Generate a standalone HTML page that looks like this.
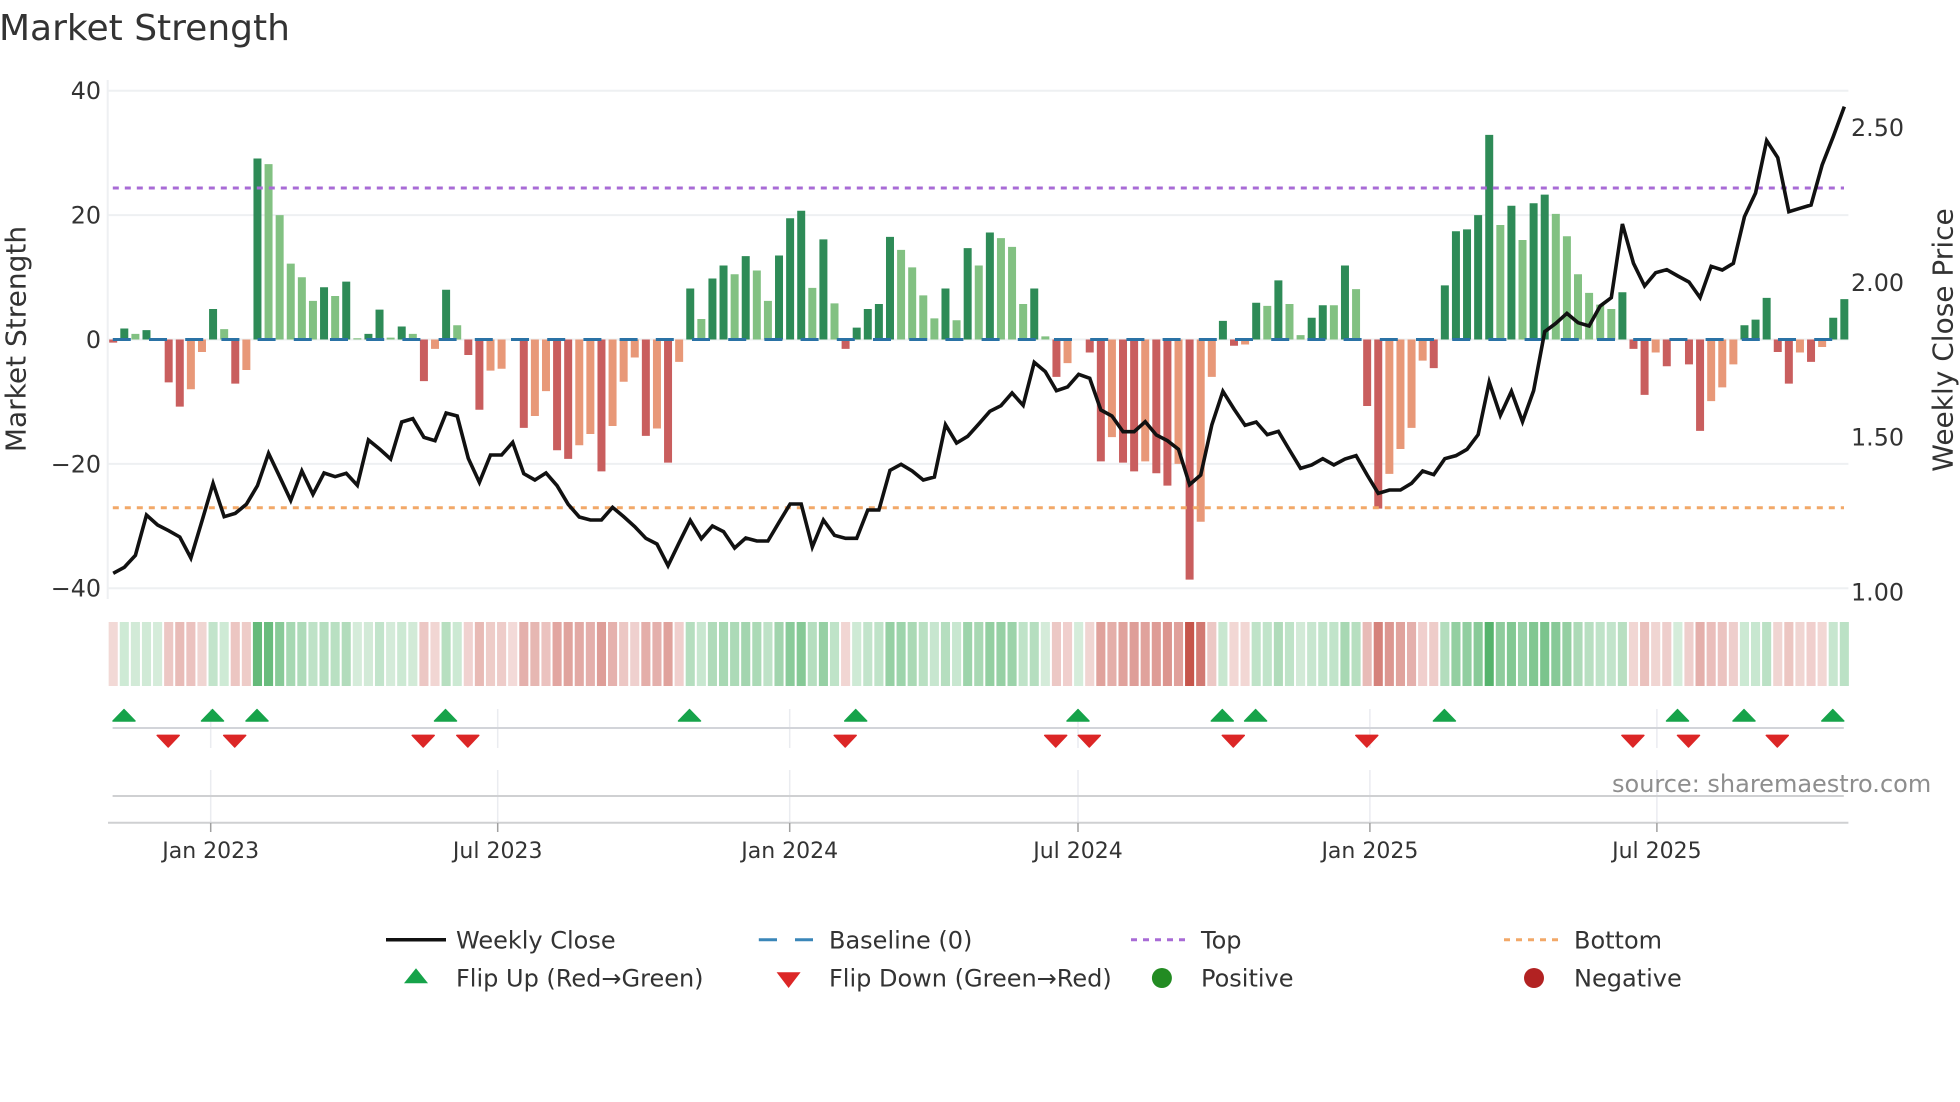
<!DOCTYPE html>
<html><head><meta charset="utf-8"><title>Market Strength</title>
<style>
html,body{margin:0;padding:0;background:#fff;width:1960px;height:1102px;overflow:hidden}
svg{display:block}
text{font-family:"DejaVu Sans","Liberation Sans",sans-serif;fill:#333}
.t{font-size:23.8px}
.x{font-size:22px}
.l{font-size:24px}
</style></head><body>
<svg width="1960" height="1102" viewBox="0 0 1960 1102" xmlns="http://www.w3.org/2000/svg">
<rect width="1960" height="1102" fill="#fff"/>
<text x="-1" y="40" style="font-size:36px">Market Strength</text>

<!-- grid -->
<g stroke="#eef0f2" stroke-width="2" fill="none">
<path d="M108 90.7H1848.4M108 215.1H1848.4M108 339.5H1848.4M108 463.9H1848.4M108 588.3H1848.4"/>
<path d="M107.7 80V599"/>
</g>

<!-- bars -->
<g transform="translate(113.2,339.5) scale(11.097,-6.22)" fill="none" stroke-width=".72">
<path stroke="#2e8b57" d="M1 0V1.77M3 0V1.5M9 0V4.9M13 0V29.1M19 0V8.4M21 0V9.3M23 0V.9M24 0V4.8M26 0V2.1M30 0V8M52 0V8.2M54 0V9.8M55 0V11.9M57 0V13.4M60 0V13.5M61 0V19.5M62 0V20.7M64 0V16.1M67 0V1.9M68 0V4.9M69 0V5.7M70 0V16.5M75 0V8.2M77 0V14.7M79 0V17.2M83 0V8.2M100 0V3M103 0V5.9M105 0V9.5M108 0V3.5M109 0V5.5M111 0V11.9M120 0V8.7M121 0V17.4M122 0V17.7M123 0V20M124 0V32.9M126 0V21.5M128 0V21.9M129 0V23.3M136 0V7.6M147 0V2.3M148 0V3.2M149 0V6.7M155 0V3.5M156 0V6.5"/>
<path stroke="#82c182" d="M2 0V.9M10 0V1.66M14 0V28.2M15 0V20M16 0V12.2M17 0V10M18 0V6.2M20 0V7M22 0V.2M25 0V.3M27 0V.9M31 0V2.3M53 0V3.3M56 0V10.5M58 0V11.1M59 0V6.2M63 0V8.3M65 0V5.8M71 0V14.4M72 0V11.6M73 0V7.1M74 0V3.4M76 0V3.1M78 0V11.9M80 0V16.3M81 0V14.9M82 0V5.7M84 0V.5M104 0V5.4M106 0V5.7M107 0V.7M110 0V5.5M112 0V8.1M125 0V18.4M127 0V16M130 0V20.2M131 0V16.6M132 0V10.5M133 0V7.5M134 0V5.6M135 0V4.9"/>
<path stroke="#c95e5e" d="M0 0V-.5M5 0V-6.9M6 0V-10.8M11 0V-7.1M28 0V-6.7M32 0V-2.5M33 0V-11.3M37 0V-14.2M40 0V-17.8M41 0V-19.2M44 0V-21.2M48 0V-15.5M50 0V-19.8M66 0V-1.5M85 0V-6M88 0V-2.1M89 0V-19.6M91 0V-19.8M92 0V-21.2M94 0V-21.5M95 0V-23.5M97 0V-38.6M101 0V-1M113 0V-10.7M114 0V-27.2M119 0V-4.6M137 0V-1.5M138 0V-8.9M140 0V-4.3M142 0V-4M143 0V-14.7M150 0V-2M151 0V-7.1M153 0V-3.6"/>
<path stroke="#e89878" d="M7 0V-8M8 0V-2M12 0V-4.9M29 0V-1.5M34 0V-5M35 0V-4.7M38 0V-12.3M39 0V-8.3M42 0V-17M43 0V-15.2M45 0V-13.9M46 0V-6.8M47 0V-2.9M49 0V-14.3M51 0V-3.6M86 0V-3.8M90 0V-15.7M93 0V-19.6M96 0V-20M98 0V-29.3M99 0V-6M102 0V-.8M115 0V-21.6M116 0V-17.6M117 0V-14.2M118 0V-3.4M139 0V-2.1M144 0V-9.9M145 0V-7.7M146 0V-4M152 0V-2.1M154 0V-1.2"/>
</g>

<!-- reference lines -->
<g fill="none">
<path d="M112.8 339.5H1844" stroke="#2a72a5" stroke-width="3" stroke-dasharray="18 18.2"/>
<path d="M112.8 188H1844" stroke="#a86bd6" stroke-width="3" stroke-dasharray="6 6"/>
<path d="M112.8 507.7H1844" stroke="#f2a868" stroke-width="3" stroke-dasharray="6 6"/>
</g>

<!-- price line -->
<g transform="translate(113.2,320) scale(11.097,.33333)">
<polyline fill="none" stroke="#111" stroke-width="3.6" stroke-linejoin="miter" stroke-miterlimit="4" vector-effect="non-scaling-stroke" points="0,760 1,742 2,706 3,585 4,615 5,632 6,651 7,714 8,603 9,490 10,590 11,580 12,553 13,497 14,400 15,470 16,541 17,453 18,523 19,459 20,470 21,460 22,496 23,360 24,387 25,417 26,306 27,296 28,352 29,362 30,279 31,288 32,415 33,487 34,405 35,405 36,367 37,461 38,480 39,459 40,497 41,553 42,591 43,600 44,600 45,562 46,590 47,620 48,655 49,672 50,737 51,668 52,601 53,656 54,618 55,635 56,684 57,654 58,663 59,663 60,607 61,552 62,552 63,681 64,600 65,646 66,655 67,655 68,570 69,570 70,451 71,433 72,453 73,480 74,471 75,314 76,369 77,349 78,312 79,274 80,257 81,219 82,256 83,127 84,155 85,212 86,201 87,163 88,175 89,270 90,288 91,335 92,335 93,305 94,345 95,362 96,388 97,494 98,465 99,315 100,214 101,267 102,316 103,306 104,344 105,334 106,390 107,445 108,435 109,416 110,435 111,417 112,407 113,465 114,520 115,510 116,510 117,490 118,453 119,464 120,416 121,407 122,388 123,344 124,186 125,286 126,214 127,305 128,212 129,35 130,10 131,-20 132,8 133,18 134,-42 135,-67 136,-288 137,-170 138,-102 139,-142 140,-151 141,-132 142,-114 143,-67 144,-161 145,-150 146,-170 147,-310 148,-381 149,-538 150,-487 151,-325 152,-335 153,-345 154,-465 155,-550 156,-640"/>
</g>

<!-- heat strip -->
<g transform="translate(113.2,622) scale(11.097,64)" fill="none" stroke-width=".82">
<g stroke="#4caf64" opacity=".94">
<path d="M1 0V1" opacity=".29"/><path d="M2 0V1" opacity=".27"/><path d="M3 0V1" opacity=".28"/><path d="M4 0V1" opacity=".25"/><path d="M9 0V1" opacity=".36"/><path d="M10 0V1" opacity=".29"/><path d="M13 0V1" opacity=".91"/><path d="M14 0V1" opacity=".89"/><path d="M15 0V1" opacity=".7"/><path d="M16 0V1" opacity=".53"/><path d="M17 0V1" opacity=".48"/><path d="M18 0V1" opacity=".39"/><path d="M19 0V1" opacity=".44"/><path d="M20 0V1" opacity=".41"/><path d="M21 0V1" opacity=".46"/><path d="M22 0V1" opacity=".25"/><path d="M23 0V1" opacity=".27"/><path d="M24 0V1" opacity=".36"/><path d="M25 0V1" opacity=".26"/><path d="M26 0V1" opacity=".3"/><path d="M27 0V1" opacity=".27"/><path d="M30 0V1" opacity=".43"/><path d="M31 0V1" opacity=".3"/>
<path d="M52 0V1" opacity=".44"/><path d="M53 0V1" opacity=".32"/><path d="M54 0V1" opacity=".47"/><path d="M55 0V1" opacity=".52"/><path d="M56 0V1" opacity=".49"/><path d="M57 0V1" opacity=".55"/><path d="M58 0V1" opacity=".5"/><path d="M59 0V1" opacity=".39"/><path d="M60 0V1" opacity=".56"/><path d="M61 0V1" opacity=".69"/><path d="M62 0V1" opacity=".72"/><path d="M63 0V1" opacity=".44"/><path d="M64 0V1" opacity=".62"/><path d="M65 0V1" opacity=".38"/><path d="M67 0V1" opacity=".29"/><path d="M68 0V1" opacity=".36"/><path d="M69 0V1" opacity=".38"/><path d="M70 0V1" opacity=".62"/><path d="M71 0V1" opacity=".58"/><path d="M72 0V1" opacity=".51"/><path d="M73 0V1" opacity=".41"/><path d="M74 0V1" opacity=".33"/><path d="M75 0V1" opacity=".44"/><path d="M76 0V1" opacity=".32"/><path d="M77 0V1" opacity=".58"/><path d="M78 0V1" opacity=".52"/><path d="M79 0V1" opacity=".64"/><path d="M80 0V1" opacity=".62"/><path d="M81 0V1" opacity=".59"/><path d="M82 0V1" opacity=".38"/><path d="M83 0V1" opacity=".44"/><path d="M84 0V1" opacity=".26"/><path d="M87 0V1" opacity=".25"/>
<path d="M100 0V1" opacity=".32"/><path d="M103 0V1" opacity=".38"/><path d="M104 0V1" opacity=".37"/><path d="M105 0V1" opacity=".47"/><path d="M106 0V1" opacity=".38"/><path d="M107 0V1" opacity=".27"/><path d="M108 0V1" opacity=".33"/><path d="M109 0V1" opacity=".37"/><path d="M110 0V1" opacity=".37"/><path d="M111 0V1" opacity=".52"/><path d="M112 0V1" opacity=".43"/><path d="M120 0V1" opacity=".45"/><path d="M121 0V1" opacity=".64"/><path d="M122 0V1" opacity=".65"/><path d="M123 0V1" opacity=".7"/><path d="M124 0V1" opacity="1"/><path d="M125 0V1" opacity=".67"/><path d="M126 0V1" opacity=".74"/><path d="M127 0V1" opacity=".61"/><path d="M128 0V1" opacity=".75"/><path d="M129 0V1" opacity=".78"/><path d="M130 0V1" opacity=".71"/><path d="M131 0V1" opacity=".63"/><path d="M132 0V1" opacity=".49"/><path d="M133 0V1" opacity=".42"/><path d="M134 0V1" opacity=".38"/><path d="M135 0V1" opacity=".36"/><path d="M136 0V1" opacity=".42"/><path d="M141 0V1" opacity=".25"/><path d="M147 0V1" opacity=".3"/><path d="M148 0V1" opacity=".32"/><path d="M149 0V1" opacity=".4"/><path d="M155 0V1" opacity=".33"/><path d="M156 0V1" opacity=".4"/>
</g>
<path d="M97 0V1" stroke="#c6554b"/>
<g stroke="#c6554b" opacity=".87">
<path d="M0 0V1" opacity=".26"/><path d="M5 0V1" opacity=".38"/><path d="M6 0V1" opacity=".46"/><path d="M7 0V1" opacity=".41"/><path d="M8 0V1" opacity=".29"/><path d="M11 0V1" opacity=".39"/><path d="M12 0V1" opacity=".35"/><path d="M28 0V1" opacity=".38"/><path d="M29 0V1" opacity=".28"/><path d="M32 0V1" opacity=".3"/><path d="M33 0V1" opacity=".47"/><path d="M34 0V1" opacity=".35"/><path d="M35 0V1" opacity=".34"/><path d="M36 0V1" opacity=".25"/><path d="M37 0V1" opacity=".53"/><path d="M38 0V1" opacity=".49"/><path d="M39 0V1" opacity=".41"/><path d="M40 0V1" opacity=".6"/><path d="M41 0V1" opacity=".62"/><path d="M42 0V1" opacity=".58"/><path d="M43 0V1" opacity=".54"/><path d="M44 0V1" opacity=".66"/><path d="M45 0V1" opacity=".52"/><path d="M46 0V1" opacity=".38"/><path d="M47 0V1" opacity=".31"/><path d="M48 0V1" opacity=".55"/><path d="M49 0V1" opacity=".53"/><path d="M50 0V1" opacity=".63"/><path d="M51 0V1" opacity=".32"/>
<path d="M66 0V1" opacity=".28"/><path d="M85 0V1" opacity=".37"/><path d="M86 0V1" opacity=".32"/><path d="M88 0V1" opacity=".29"/><path d="M89 0V1" opacity=".63"/><path d="M90 0V1" opacity=".55"/><path d="M91 0V1" opacity=".63"/><path d="M92 0V1" opacity=".66"/><path d="M93 0V1" opacity=".63"/><path d="M94 0V1" opacity=".67"/><path d="M95 0V1" opacity=".71"/><path d="M96 0V1" opacity=".64"/><path d="M98 0V1" opacity=".9"/><path d="M99 0V1" opacity=".37"/><path d="M101 0V1" opacity=".27"/><path d="M102 0V1" opacity=".27"/>
<path d="M113 0V1" opacity=".46"/><path d="M114 0V1" opacity=".84"/><path d="M115 0V1" opacity=".7"/><path d="M116 0V1" opacity=".62"/><path d="M117 0V1" opacity=".53"/><path d="M118 0V1" opacity=".32"/><path d="M119 0V1" opacity=".34"/><path d="M137 0V1" opacity=".28"/><path d="M138 0V1" opacity=".42"/><path d="M139 0V1" opacity=".29"/><path d="M140 0V1" opacity=".33"/><path d="M142 0V1" opacity=".33"/><path d="M143 0V1" opacity=".54"/><path d="M144 0V1" opacity=".44"/><path d="M145 0V1" opacity=".4"/><path d="M146 0V1" opacity=".33"/><path d="M150 0V1" opacity=".29"/><path d="M151 0V1" opacity=".39"/><path d="M152 0V1" opacity=".29"/><path d="M153 0V1" opacity=".32"/><path d="M154 0V1" opacity=".27"/>
</g>
</g>

<!-- lower panels -->
<g fill="none">
<path stroke="#eaecf0" stroke-width="1.5" d="M210.7 709V748M497.7 709V748M789.7 709V748M1078 709V748M1369.9 709V748M1656.9 709V748M210.7 770V822M497.7 770V822M789.7 770V822M1078 770V822M1369.9 770V822M1656.9 770V822"/>
<path stroke="#d2d4d9" stroke-width="2" d="M112.6 728H1843.8"/>
<path stroke="#cfd0d2" stroke-width="2" d="M112.6 796H1843.8"/>
<path stroke="#cfd0d2" stroke-width="2" d="M108 822.7H1848.4"/>
<path stroke="#a0a0a0" stroke-width="1.5" d="M210.7 823V832M497.7 823V832M789.7 823V832M1078 823V832M1369.9 823V832M1656.9 823V832"/>
</g>
<path fill="#16a34a" stroke="#16a34a" stroke-width="1.5" stroke-linejoin="round" d="M113 721l11-11.4 11 11.4zM201.5 721l11-11.4 11 11.4zM246 721l11-11.4 11 11.4zM434.5 721l11-11.4 11 11.4zM678.5 721l11-11.4 11 11.4zM844.7 721l11-11.4 11 11.4zM1067 721l11-11.4 11 11.4zM1211.3 721l11-11.4 11 11.4zM1244.6 721l11-11.4 11 11.4zM1433.4 721l11-11.4 11 11.4zM1666.5 721l11-11.4 11 11.4zM1733 721l11-11.4 11 11.4zM1821.8 721l11-11.4 11 11.4z"/>
<path fill="#dc2626" stroke="#dc2626" stroke-width="1.5" stroke-linejoin="round" d="M157.2 735.4h22l-11 11.6zM223.7 735.4h22l-11 11.6zM412.2 735.4h22l-11 11.6zM456.8 735.4h22l-11 11.6zM834.2 735.4h22l-11 11.6zM1044.7 735.4h22l-11 11.6zM1078.3 735.4h22l-11 11.6zM1222.3 735.4h22l-11 11.6zM1355.8 735.4h22l-11 11.6zM1621.9 735.4h22l-11 11.6zM1677.5 735.4h22l-11 11.6zM1766.3 735.4h22l-11 11.6z"/>
<text x="1612" y="792" style="font-size:24px;fill:#8e8e8e">source: sharemaestro.com</text>

<!-- tick labels -->
<g text-anchor="end">
<text class="t" x="101" y="99">40</text>
<text class="t" x="101" y="223.3">20</text>
<text class="t" x="101" y="347.8">0</text>
<text class="t" x="101" y="472.3">−20</text>
<text class="t" x="101" y="596.6">−40</text>
</g>
<text class="t" x="1851" y="136">2.50</text>
<text class="t" x="1851" y="291">2.00</text>
<text class="t" x="1851" y="445.7">1.50</text>
<text class="t" x="1851" y="600.7">1.00</text>
<g text-anchor="middle">
<text class="x" x="210.7" y="858">Jan 2023</text>
<text class="x" x="497.7" y="858">Jul 2023</text>
<text class="x" x="789.7" y="858">Jan 2024</text>
<text class="x" x="1078" y="858">Jul 2024</text>
<text class="x" x="1369.9" y="858">Jan 2025</text>
<text class="x" x="1656.9" y="858">Jul 2025</text>
</g>
<text transform="translate(25.5,339) rotate(-90)" text-anchor="middle" style="font-size:28px">Market Strength</text>
<text transform="translate(1952.5,340) rotate(-90)" text-anchor="middle" style="font-size:28px">Weekly Close Price</text>

<!-- legend -->
<g fill="none">
<path d="M386 939.7H446" stroke="#111" stroke-width="3.5"/>
<path d="M758.8 939.7H813" stroke="#3a86b8" stroke-width="3" stroke-dasharray="18.2 18"/>
<path d="M1131 939.7H1187" stroke="#a86bd6" stroke-width="3" stroke-dasharray="6 6"/>
<path d="M1504 939.7H1558" stroke="#f2a868" stroke-width="3" stroke-dasharray="6 6"/>
</g>
<path fill="#16a34a" d="M404 983.3l12-15 12 15z"/>
<path fill="#dc2626" d="M776.6 972.3h24l-12 15.7z"/>
<ellipse cx="1161.9" cy="978" rx="10" ry="10" fill="#228b22"/>
<ellipse cx="1534" cy="978" rx="10" ry="10" fill="#b22222"/>
<text class="l" x="456" y="948.5">Weekly Close</text>
<text class="l" x="829" y="948.5">Baseline (0)</text>
<text class="l" x="1201" y="948.5">Top</text>
<text class="l" x="1574" y="948.5">Bottom</text>
<text class="l" x="456" y="986.5">Flip Up (Red→Green)</text>
<text class="l" x="829" y="986.5">Flip Down (Green→Red)</text>
<text class="l" x="1201" y="986.5">Positive</text>
<text class="l" x="1574" y="986.5">Negative</text>
</svg>
</body></html>
